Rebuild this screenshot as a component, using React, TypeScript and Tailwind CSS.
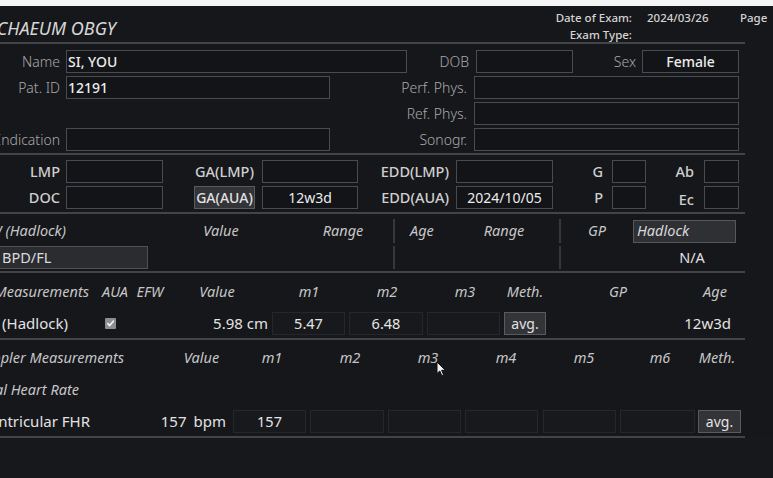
import * as React from 'react';
import clsx from 'clsx';

// ---------------------------------------------------------------------------
// Small building blocks
// ---------------------------------------------------------------------------

function Field({ className, children }: { className?: string; children?: React.ReactNode }) {
  return (
    <div
      className={clsx(
        'h-[23px] shrink-0 border border-[#4a4b50] bg-[#131417] flex items-center text-[14px] font-medium text-[#ececec]',
        className
      )}
    >
      {children}
    </div>
  );
}

function Cell({ className, children }: { className?: string; children?: React.ReactNode }) {
  return (
    <div
      className={clsx(
        'h-[23px] shrink-0 border border-[#26272b] bg-[#18191c] flex items-center justify-center text-[14.5px] text-[#e6e6e6]',
        className
      )}
    >
      {children}
    </div>
  );
}

function Btn({ className, children }: { className?: string; children: React.ReactNode }) {
  return (
    <div
      className={clsx(
        'h-[23px] shrink-0 border border-[#5a5b60] bg-[#333438] flex items-center justify-center text-[14px] text-[#e2e2e2]',
        className
      )}
    >
      {children}
    </div>
  );
}

// label whose right edge is fixed; long text overflows to the left and is clipped
function RLabel({ className, children }: { className?: string; children: React.ReactNode }) {
  return (
    <div className={clsx('shrink-0 flex justify-end whitespace-nowrap', className)}>
      <span>{children}</span>
    </div>
  );
}

function CLabel({ className, children }: { className?: string; children?: React.ReactNode }) {
  return (
    <div className={clsx('shrink-0 flex justify-center whitespace-nowrap', className)}>
      <span>{children}</span>
    </div>
  );
}

function Rule() {
  return <div className="h-[2px] w-[745px] shrink-0 bg-[#434448]" />;
}

function Divider() {
  return <div className="w-[2px] self-stretch shrink-0 bg-[#36373b]" />;
}

// ---------------------------------------------------------------------------
// App
// ---------------------------------------------------------------------------

export default function App() {
  return (
    <div className="relative w-[773px] h-[478px] overflow-hidden bg-[#16171a] font-['Noto_Sans',sans-serif] flex flex-col">
      <div className="h-[6px] shrink-0 bg-[#f5f5f5]" />

      {/* Header */}
      <div className="h-[36px] shrink-0 flex items-start">
        <RLabel className="w-[116px] mt-[10px] leading-[24px] text-[18px] italic text-[#d6d6d6]">
          CHAEUM OBGY
        </RLabel>
        <div className="w-[516px] shrink-0 flex flex-col items-end pt-[5px] gap-[3px] text-[11.5px] font-medium text-[#d4d4d4] leading-[14px]">
          <span>Date of Exam:</span>
          <span>Exam Type:</span>
        </div>
        <div className="ml-[15px] w-[93px] shrink-0 pt-[5px] text-[11.5px] font-medium text-[#d4d4d4] leading-[14px]">
          2024/03/26
        </div>
        <div className="pt-[5px] text-[11.5px] font-medium text-[#d4d4d4] leading-[14px]">Page</div>
      </div>
      <Rule />

      {/* Patient */}
      <div className="shrink-0 pt-[6px] pb-[2px] flex flex-col gap-[3px] text-[14px] font-light text-[#a8a8ab]">
        <div className="h-[23px] flex items-center">
          <RLabel className="w-[60px]">Name</RLabel>
          <Field className="ml-[6px] w-[341px] pl-[1px]">SI, YOU</Field>
          <RLabel className="w-[62px]">DOB</RLabel>
          <Field className="ml-[7px] w-[97px]" />
          <RLabel className="w-[63px]">Sex</RLabel>
          <Field className="ml-[6px] w-[97px] justify-center">Female</Field>
        </div>
        <div className="h-[23px] flex items-center">
          <RLabel className="w-[60px]">Pat. ID</RLabel>
          <Field className="ml-[6px] w-[264px] pl-[1px]">12191</Field>
          <RLabel className="w-[137px]">Perf. Phys.</RLabel>
          <Field className="ml-[7px] w-[265px]" />
        </div>
        <div className="h-[23px] flex items-center">
          <div className="w-[330px] shrink-0" />
          <RLabel className="w-[137px]">Ref. Phys.</RLabel>
          <Field className="ml-[7px] w-[265px]" />
        </div>
        <div className="h-[23px] flex items-center">
          <RLabel className="w-[60px]">Indication</RLabel>
          <Field className="ml-[6px] w-[264px]" />
          <RLabel className="w-[137px]">Sonogr.</RLabel>
          <Field className="ml-[7px] w-[265px]" />
        </div>
      </div>
      <Rule />

      {/* Pregnancy dates */}
      <div className="shrink-0 pt-[5px] pb-[3px] flex flex-col gap-[3px] text-[14.5px] font-medium text-[#cfcfd1]">
        <div className="h-[23px] flex items-center">
          <RLabel className="w-[60px]">LMP</RLabel>
          <Field className="ml-[6px] w-[97px]" />
          <CLabel className="ml-[31px] w-[61px]">GA(LMP)</CLabel>
          <Field className="ml-[7px] w-[96px]" />
          <RLabel className="w-[91px]">EDD(LMP)</RLabel>
          <Field className="ml-[7px] w-[97px]" />
          <RLabel className="w-[50px]">G</RLabel>
          <Field className="ml-[9px] w-[34px]" />
          <RLabel className="w-[48px]">Ab</RLabel>
          <Field className="ml-[10px] w-[35px]" />
        </div>
        <div className="h-[23px] flex items-center">
          <RLabel className="w-[60px]">DOC</RLabel>
          <Field className="ml-[6px] w-[97px]" />
          <Btn className="ml-[31px] w-[61px] font-medium text-[#d4d4d6]">GA(AUA)</Btn>
          <Field className="ml-[7px] w-[96px] justify-center font-normal text-[14.5px]">12w3d</Field>
          <RLabel className="w-[91px]">EDD(AUA)</RLabel>
          <Field className="ml-[7px] w-[97px] justify-center font-normal text-[14.5px]">2024/10/05</Field>
          <RLabel className="w-[50px]">P</RLabel>
          <Field className="ml-[9px] w-[34px]" />
          <RLabel className="w-[48px] pt-[4px]">Ec</RLabel>
          <Field className="ml-[10px] w-[35px]" />
        </div>
      </div>
      <Rule />

      {/* EFW */}
      <div className="shrink-0 pt-[5px] pb-[2px] flex flex-col gap-[3px] text-[14.5px] italic text-[#c6c6c8]">
        <div className="h-[24px] flex items-center">
          <RLabel className="w-[66px]">EFW (Hadlock)</RLabel>
          <div className="w-[119px] shrink-0" />
          <CLabel className="w-[72px]">Value</CLabel>
          <div className="w-[36px] shrink-0" />
          <CLabel className="w-[100px]">Range</CLabel>
          <Divider />
          <div className="w-[59px] shrink-0 pl-[15px]">Age</div>
          <CLabel className="w-[100px]">Range</CLabel>
          <div className="w-[5px] shrink-0" />
          <Divider />
          <CLabel className="w-[72px]">GP</CLabel>
          <div className="h-[23px] w-[103px] shrink-0 border border-[#56575c] bg-[#2f3034] flex items-center pl-[3px] text-[#d8d8da]">
            Hadlock
          </div>
        </div>
        <div className="h-[23px] flex items-center not-italic">
          <div className="h-[23px] w-[148px] shrink-0 border border-l-0 border-[#505155] bg-[#2b2c30] flex items-center pl-[2px] text-[#dcdcde]">
            BPD/FL
          </div>
          <div className="w-[245px] shrink-0" />
          <Divider />
          <div className="w-[164px] shrink-0" />
          <Divider />
          <div className="w-[72px] shrink-0" />
          <CLabel className="w-[118px] text-[#e0e0e2]">N/A</CLabel>
        </div>
      </div>
      <Rule />

      {/* 2D measurements */}
      <div className="shrink-0 pt-[8px] pb-[3px] flex flex-col text-[14.5px] text-[#c6c6c8]">
        <div className="h-[22px] flex items-center italic">
          <RLabel className="w-[89px]">2D Measurements</RLabel>
          <CLabel className="ml-[6px] w-[40px]">AUA</CLabel>
          <CLabel className="w-[30px]">EFW</CLabel>
          <CLabel className="w-[104px]">Value</CLabel>
          <CLabel className="w-[80px]">m1</CLabel>
          <CLabel className="w-[76px]">m2</CLabel>
          <CLabel className="w-[80px]">m3</CLabel>
          <CLabel className="w-[40px]">Meth.</CLabel>
          <CLabel className="w-[146px]">GP</CLabel>
          <CLabel className="w-[48px]">Age</CLabel>
        </div>
        <div className="mt-[9px] h-[23px] flex items-center text-[15px] text-[#e2e2e4]">
          <RLabel className="w-[68px]">FL (Hadlock)</RLabel>
          <div className="ml-[37px] w-[11px] h-[11px] shrink-0 rounded-[1px] bg-[#8d8e94] flex items-center justify-center">
            <svg width="9" height="9" viewBox="0 0 9 9" fill="none">
              <path d="M1.8 4.6 L3.7 6.6 L7.3 2.2" stroke="#f4f4f4" strokeWidth="1.6" strokeLinecap="round" strokeLinejoin="round" />
            </svg>
          </div>
          <RLabel className="w-[152px]">5.98 cm</RLabel>
          <Cell className="ml-[4px] w-[73px]">5.47</Cell>
          <Cell className="ml-[4px] w-[74px]">6.48</Cell>
          <Cell className="ml-[4px] w-[73px]" />
          <Btn className="ml-[4px] w-[42px]">avg.</Btn>
          <RLabel className="w-[185px]">12w3d</RLabel>
        </div>
      </div>
      <Rule />

      {/* Doppler */}
      <div className="shrink-0 pt-[7px] pb-[3px] flex flex-col text-[14.5px] text-[#c6c6c8]">
        <div className="h-[22px] flex items-center italic">
          <RLabel className="w-[124px]">Doppler Measurements</RLabel>
          <CLabel className="ml-[46px] w-[63px]">Value</CLabel>
          <CLabel className="w-[78px]">m1</CLabel>
          <CLabel className="w-[78px]">m2</CLabel>
          <CLabel className="w-[78px]">m3</CLabel>
          <CLabel className="w-[78px]">m4</CLabel>
          <CLabel className="w-[78px]">m5</CLabel>
          <CLabel className="w-[74px]">m6</CLabel>
          <CLabel className="w-[40px]">Meth.</CLabel>
        </div>
        <div className="mt-[10px] h-[22px] flex items-center italic">
          <RLabel className="w-[79px]">Fetal Heart Rate</RLabel>
        </div>
        <div className="mt-[9px] h-[23px] flex items-center text-[15px] text-[#e2e2e4]">
          <RLabel className="w-[90px]">Ventricular FHR</RLabel>
          <div className="w-[136px] shrink-0 flex justify-end gap-[7px] whitespace-nowrap">
            <span>157</span>
            <span>bpm</span>
          </div>
          <Cell className="ml-[7px] w-[73px]">157</Cell>
          <Cell className="ml-[4px] w-[74px]" />
          <Cell className="ml-[4px] w-[73px]" />
          <Cell className="ml-[4px] w-[73px]" />
          <Cell className="ml-[5px] w-[73px]" />
          <Cell className="ml-[4px] w-[75px]" />
          <Btn className="ml-[3px] w-[43px]">avg.</Btn>
        </div>
      </div>
      <Rule />

      <div className="flex-1 bg-[#17181b]" />

      {/* mouse pointer */}
      <svg className="absolute left-[436px] top-[361px]" width="11" height="16" viewBox="0 0 11 16">
        <path d="M1 1 L1 12.5 L3.8 10 L5.8 14.6 L7.6 13.8 L5.6 9.3 L9.4 9.3 Z" fill="#f2f2f2" stroke="#111" strokeWidth="1" strokeLinejoin="round" />
      </svg>
    </div>
  );
}
